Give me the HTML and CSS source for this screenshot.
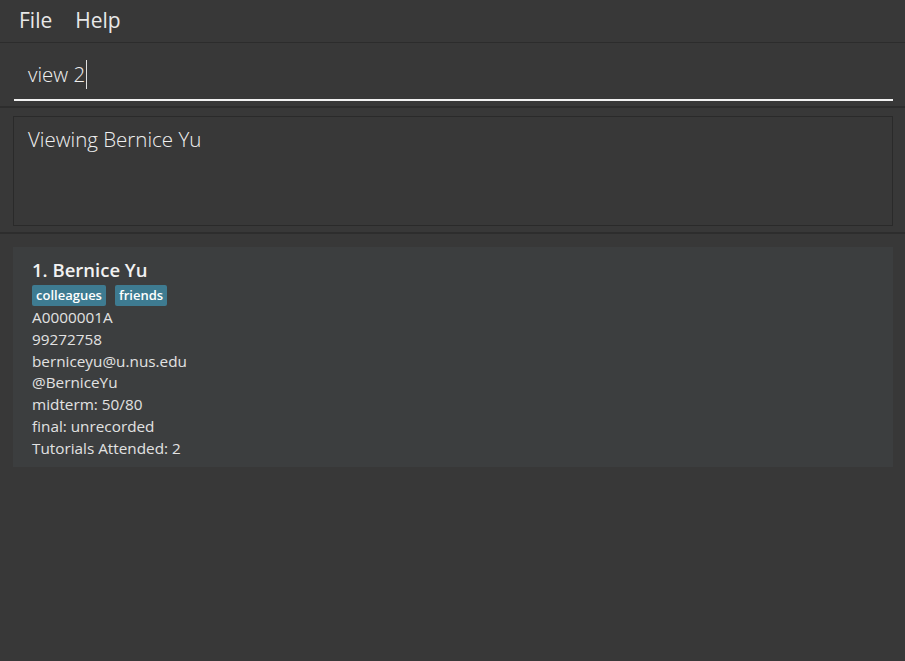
FILE: index.html
```html
<!DOCTYPE html>
<html>
<head>
<meta charset="utf-8">
<link rel="stylesheet" href="styles.css">
</head>
<body>
<div class="window">
  <div class="menubar">
    <span class="menu-item">File</span>
    <span class="menu-item">Help</span>
  </div>
  <div class="command-panel">
    <div class="command-box">
      <span class="command-text">view 2</span><span class="caret"></span>
    </div>
  </div>
  <div class="result-panel">
    <div class="result-box">Viewing Bernice Yu</div>
  </div>
  <div class="list-panel">
    <div class="card">
      <div class="name">1. Bernice Yu</div>
      <div class="tags">
        <span class="tag">colleagues</span>
        <span class="tag">friends</span>
      </div>
      <div class="field">A0000001A</div>
      <div class="field">99272758</div>
      <div class="field">berniceyu@u.nus.edu</div>
      <div class="field">@BerniceYu</div>
      <div class="field">midterm: 50/80</div>
      <div class="field">final: unrecorded</div>
      <div class="field">Tutorials Attended: 2</div>
    </div>
  </div>
</div>
</body>
</html>
```
FILE: styles.css
```css
html, body {
  margin: 0;
  padding: 0;
  background: #383838;
  height: 100%;
}
body {
  font-family: "Open Sans", "Noto Sans", sans-serif;
  color: #ffffff;
}
.window {
  width: 905px;
  height: 661px;
  display: flex;
  flex-direction: column;
  background: #383838;
}
.menubar {
  height: 42px;
  border-bottom: 1px solid #2c2c2c;
  display: flex;
  align-items: center;
  gap: 23px;
  padding-left: 19px;
}
.menu-item {
  font-size: 21px;
  font-weight: 400;
  color: #e8e8e8;
  line-height: 1;
  position: relative;
  top: -1px;
}
.command-panel {
  height: 65px;
  border-bottom: 2px solid #2d2d2d;
  padding: 0 12px 0 14px;
  box-sizing: border-box;
}
.command-box {
  height: 54px;
  margin-top: 2px;
  border-bottom: 2px solid #f2f2f2;
  display: flex;
  align-items: center;
  padding-left: 14px;
}
.command-text {
  font-size: 20.5px;
  font-weight: 300;
  color: #f0f0f0;
  position: relative;
  top: 2px;
}
.caret {
  display: inline-block;
  width: 1px;
  height: 29px;
  background: #e0e0e0;
  margin-left: 1px;
  position: relative;
  top: 2px;
}
.result-panel {
  padding: 8px 12px 6px 13px;
  border-bottom: 2px solid #2d2d2d;
}
.result-box {
  height: 110px;
  box-sizing: border-box;
  border: 1px solid #2a2a2a;
  padding: 7px 0 0 14px;
  font-size: 20.5px;
  font-weight: 300;
  color: #f0f0f0;
  line-height: 30px;
}
.list-panel {
  flex: 1;
  padding: 13px 12px 0 13px;
}
.card {
  background: #3c3e3f;
  height: 220px;
  box-sizing: border-box;
  padding: 9px 0 0 19px;
}
.name {
  font-size: 18.5px;
  font-weight: 600;
  color: #f2f2f2;
  line-height: 27px;
}
.tags {
  display: flex;
  gap: 9px;
  margin-top: 2px;
  margin-bottom: 1px;
}
.tag {
  background: #3e7b91;
  color: #ffffff;
  font-size: 13px;
  font-weight: 600;
  line-height: 21px;
  padding: 0 4px;
  border-radius: 2px;
}
.field {
  font-size: 15.3px;
  color: #e2e2e2;
  line-height: 21.8px;
}
```
